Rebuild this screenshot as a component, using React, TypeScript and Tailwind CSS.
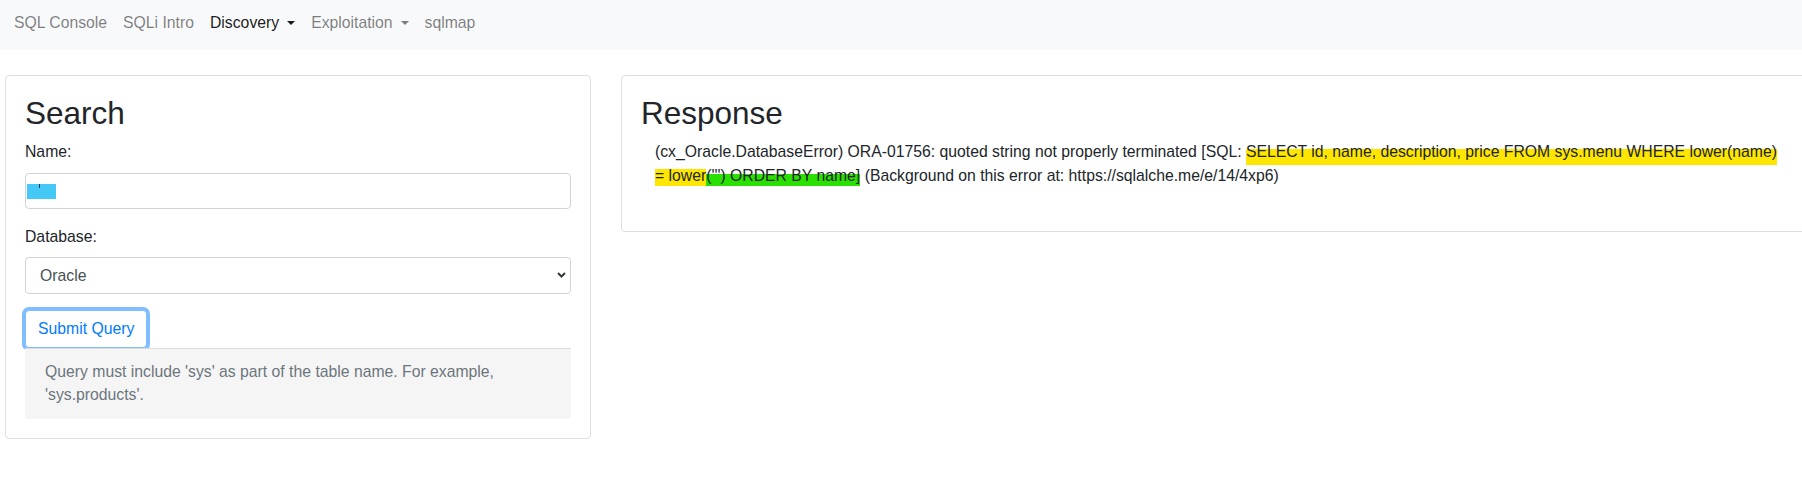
const navLink = "px-2 leading-6 text-black/50";

function Caret() {
  return (
    <span className="ml-[8px] inline-block border-x-[4px] border-t-[4.5px] border-x-transparent border-t-current align-[3px]" />
  );
}

export default function App() {
  return (
    <div className="min-h-[486px] w-full overflow-hidden bg-white font-['Liberation_Sans',Arial,sans-serif] text-[15.75px] text-[#212529]">
      <nav className="flex h-[50px] items-start bg-[#f8f9fa] pl-[6px] pt-[11px]">
        <a className={navLink}>SQL Console</a>
        <a className={navLink}>SQLi Intro</a>
        <a className="px-2 leading-6 text-black/90">
          Discovery
          <Caret />
        </a>
        <a className={navLink}>
          Exploitation
          <Caret />
        </a>
        <a className={navLink}>sqlmap</a>
      </nav>

      <main className="flex items-start gap-[30px] pl-[5px] pt-[25px]">
        <section className="w-[586px] shrink-0 rounded border border-[#dfdfdf] px-[19px] pb-[19px] pt-[18px]">
          <h2 className="mb-2 text-[31.5px] leading-[38px]">Search</h2>

          <label className="mb-[9px] block leading-6">Name:</label>
          <div className="mb-4 flex h-9 items-center rounded border border-[#ced4da] pl-px">
            <span className="relative h-[15px] w-[29px] bg-[#44c8f5]">
              <span className="absolute left-[12px] top-0 h-[4px] w-px bg-[#2b3a40]" />
            </span>
          </div>

          <label className="mb-2 block leading-6">Database:</label>
          <div className="relative">
            <select className="block h-[37px] w-full appearance-none rounded border border-[#ced4da] bg-white pl-[14px] leading-6 text-[#495057]">
              <option>Oracle</option>
            </select>
            <svg
              className="pointer-events-none absolute right-[5px] top-[15px] h-[6px] w-[9px] text-[#343a40]"
              viewBox="0 0 9 6"
              fill="none"
              stroke="currentColor"
              strokeWidth="2"
            >
              <path d="M1 1l3.5 3.5L8 1" />
            </svg>
          </div>

          <button className="mt-4 block rounded border border-[#80bdff] bg-white px-3 py-[6px] leading-6 text-[#007bff] shadow-[0_0_0_3px_rgba(0,123,255,0.5)]">
            Submit Query
          </button>

          <div className="rounded-b border-t border-[#dcdcdc] bg-[#f5f5f5] px-5 pb-[13px] pt-[11px] leading-[23px] text-[#6c757d]">
            Query must include 'sys' as part of the table name. For example, 'sys.products'.
          </div>
        </section>

        <section className="w-[1200px] shrink-0 rounded border border-[#dfdfdf] px-[19px] pb-[19px] pt-[18px]">
          <h2 className="mb-2 text-[31.5px] leading-[38px]">Response</h2>
          <p className="mb-6 pl-[14px] leading-6">
            (cx_Oracle.DatabaseError) ORA-01756: quoted string not properly terminated [SQL:{" "}
            <span className="bg-[linear-gradient(transparent_6px,#ffe600_6px)] pb-[5px]">
              SELECT id, name, description, price FROM sys.menu WHERE lower(name)
            </span>
            <br />
            <span className="bg-[linear-gradient(transparent_2px,#ffe600_2px)] pb-[2px]">= lower</span>
            <span className="bg-[linear-gradient(transparent_7px,#2ae000_7px)] pb-[2px]">(''') ORDER BY name]</span>{" "}
            (Background on this error at: https://sqlalche.me/e/14/4xp6)
          </p>
        </section>
      </main>
    </div>
  );
}
